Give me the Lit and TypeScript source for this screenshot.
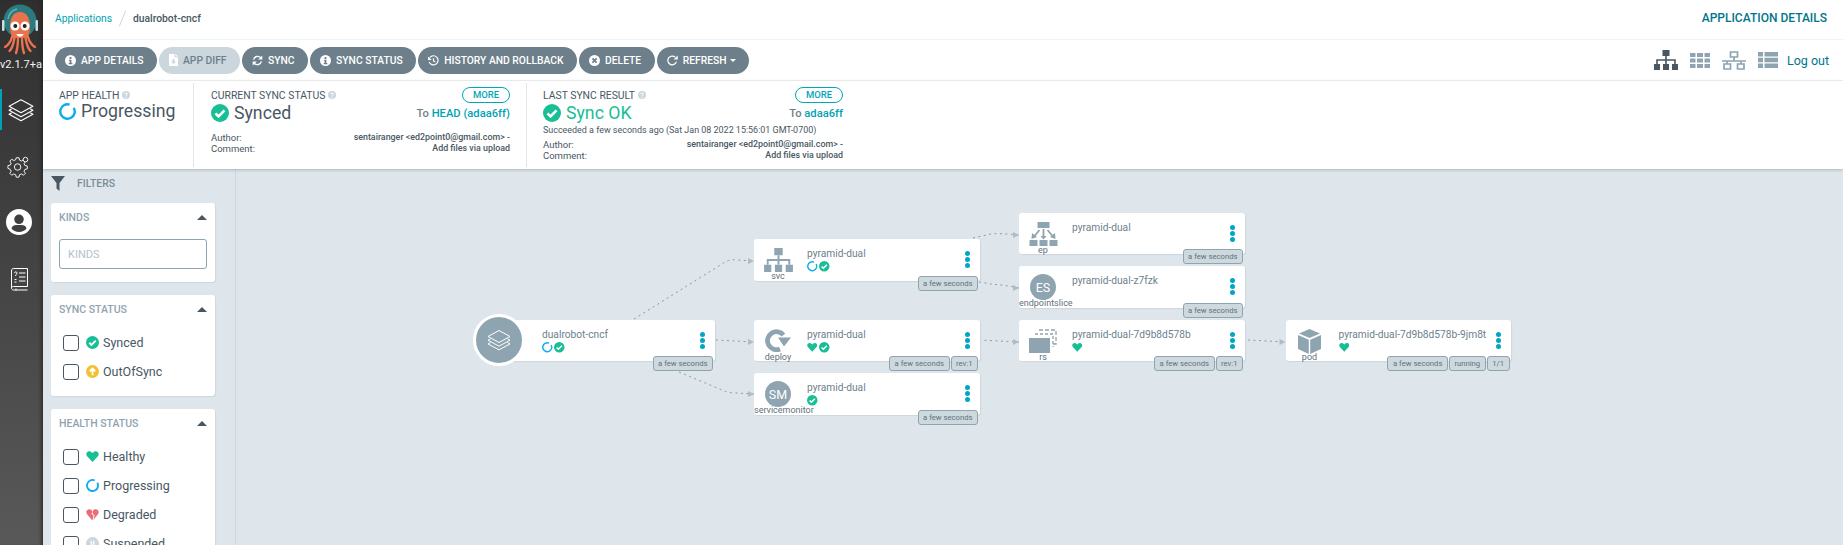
import { css, html, svg, LitElement } from "lit";
import { customElement } from "lit/decorators.js";

const GREY = "#8fa4b1";

const check = (s = 10.5) => html`<svg width=${s} height=${s} viewBox="0 0 24 24"><circle cx="12" cy="12" r="12" fill="#18be94"/><path d="M6 12.5l4 4 8-8" fill="none" stroke="#fff" stroke-width="3.6"/></svg>`;
const spin = (s = 10.5) => html`<svg width=${s} height=${s} viewBox="0 0 24 24"><circle cx="12" cy="12" r="10.2" fill="none" stroke="#0dadea" stroke-width="3.4" stroke-dasharray="56 8.1" transform="rotate(-30 12 12)"/></svg>`;
const heart = (s = 10.5) => html`<svg width=${s} height=${s} viewBox="0 0 24 24"><path d="M12 22L2 11.5C-1 8 1 2.5 6.2 2.5 9 2.5 11 4.5 12 6 13 4.5 15 2.5 17.8 2.5 23 2.5 25 8 22 11.5z" fill="#18be94"/></svg>`;
const help = () => html`<svg width="8" height="8" viewBox="0 0 24 24"><circle cx="12" cy="12" r="12" fill="#ccd6dd"/><path d="M8 9.5c0-5 8-5 8 0 0 3-4 3-4 6" fill="none" stroke="#fff" stroke-width="3"/><rect x="10.4" y="17.5" width="3.2" height="3.2" fill="#fff"/></svg>`;

const info = () => html`<svg width="11" height="11" viewBox="0 0 24 24"><path fill="#fff" fill-rule="evenodd" d="M12 0a12 12 0 1 0 0 24 12 12 0 0 0 0-24zM10 4.5h4v4h-4zM9 10.5h5v7h2V20H8v-2.5h2v-4.5H9z"/></svg>`;
const file = () => html`<svg width="9" height="12" viewBox="0 0 18 24"><path fill="#fff" fill-rule="evenodd" d="M0 0h11v7h7v17H0zM13 0l5 5h-5zM7 10v5H4l5 5 5-5h-3v-5z"/></svg>`;
const sync = () => html`<svg width="11" height="11" viewBox="0 0 24 24" fill="none" stroke="#fff" stroke-width="3"><path d="M3.5 10a9 9 0 0 1 15.5-4"/><path d="M20.5 14a9 9 0 0 1-15.5 4"/><path fill="#fff" stroke="none" d="M22.5 1v9h-9zM1.5 23v-9h9z"/></svg>`;
const history = () => html`<svg width="11" height="11" viewBox="0 0 24 24" fill="none" stroke="#fff" stroke-width="2.6"><path d="M4 5.5A10 10 0 1 1 2.5 15"/><path d="M12 7v6l4 2.5"/><path fill="#fff" stroke="none" d="M0 3l8 8H0z"/></svg>`;
const times = () => html`<svg width="11" height="11" viewBox="0 0 24 24"><circle cx="12" cy="12" r="12" fill="#fff"/><path d="M7.5 7.5l9 9M16.5 7.5l-9 9" stroke="#6d7f8b" stroke-width="3.6"/></svg>`;
const redo = () => html`<svg width="11" height="11" viewBox="0 0 24 24" fill="none" stroke="#fff" stroke-width="2.6"><path d="M20.5 14.5A9.5 9.5 0 1 1 18 5"/><path fill="#fff" stroke="none" d="M23.5 1v9h-9z"/></svg>`;

const sitemap = (c: string, w: number, h: number) => html`<svg width=${w} height=${h} viewBox="0 0 24 20"><path fill=${c} d="M8.5 0h7v6h-7zM0 14h6v6H0zM9 14h6v6H9zM18 14h6v6h-6z"/><path fill="none" stroke=${c} stroke-width="1.6" d="M12 6v8M3 14v-4h18v4"/></svg>`;
const gridIcon = () => html`<svg width="20" height="15" viewBox="0 0 20 15"><path fill=${GREY} d="M0 0h5.500v4H0zM7 0h6v4H7zM14.500 0H20v4h-5.500zM0 5.500h5.500v4H0zM7 5.500h6v4H7zM14.500 5.500H20v4h-5.500zM0 11h5.500v4H0zM7 11h6v4H7zM14.500 11H20v4h-5.500z"/></svg>`;
const network = () => html`<svg width="24" height="19" viewBox="0 0 24 19" fill="none" stroke=${GREY} stroke-width="1.7"><path d="M8.5 1h7v5h-7zM2 13h6.500v5H2zM15.500 13H22v5h-6.500zM12 6v4M0 10h24M5 10v3M19 10v3"/></svg>`;
const listIcon = () => html`<svg width="20" height="16" viewBox="0 0 20 16"><path fill=${GREY} d="M0 0h5v4.500H0zM6.500 0H20v4.500H6.500zM0 5.800h5v4.500H0zM6.500 5.800H20v4.500H6.500zM0 11.500h5V16H0zM6.500 11.500H20V16H6.500z"/></svg>`;

const layers = (s: number) => html`<svg width=${s} height=${s} viewBox="0 0 24 24" fill="none" stroke="#fff" stroke-width="1" stroke-linejoin="round"><path d="M12 2.5L23 8.5 12 14.5 1 8.5z"/><path d="M3.5 10.800L1 12.200 12 18.200 23 12.200 20.500 10.800"/><path d="M3.5 14.500L1 15.900 12 21.900 23 15.900 20.500 14.500"/></svg>`;

const logo = html`<svg width="40" height="56" viewBox="0 0 40 56">
  <circle cx="20" cy="21" r="16.500" fill="#2c7a7e"/>
  <path d="M8 19a12.500 12.500 0 0 1 9-10" fill="none" stroke="#5db5b5" stroke-width="1.500"/>
  <rect x="2" y="20" width="2.500" height="11" rx="1" fill="#c7dfe6"/>
  <rect x="35.500" y="20" width="2.500" height="11" rx="1" fill="#c7dfe6"/>
  <path d="M10 27c0-10 4-15 10-15s10 5 10 15c0 6-2 9-2 11H12c0-2-2-5-2-11z" fill="#e9734e"/>
  <path d="M12 37c-1 5-5 9-7 10M14.500 38c-1 6-3 11-5 13M18 38c0 6-1 12-2 15M22 38c0 6 1 12 2 15M25.500 38c1 6 3 11 5 13M28 37c1 5 5 9 7 10" stroke="#e9734e" stroke-width="2.400" fill="none" stroke-linecap="round"/>
  <circle cx="15" cy="26" r="4.500" fill="#fff"/><circle cx="25" cy="26" r="4.500" fill="#fff"/>
  <circle cx="15.300" cy="26" r="2" fill="#222"/><circle cx="24.700" cy="26" r="2" fill="#222"/>
  <path d="M16.500 34h7c-.5 3.500-6.500 3.500-7 0z" fill="#fff"/>
</svg>`;

const gear = html`<svg width="24" height="24" viewBox="0 0 26 26" fill="none" stroke="#fff" stroke-width="1"><path d="M10 3h3l.6 2.600 2 .9 2.300-1.400 2 2-1.400 2.300.9 2 2.600.6v3l-2.600.6-.9 2 1.400 2.300-2 2-2.300-1.400-2 .9-.6 2.600h-3l-.6-2.600-2-.9-2.300 1.400-2-2 1.400-2.300-.9-2L1 14.500v-3l2.600-.6.9-2-1.400-2.300 2-2 2.300 1.400 2-.9z"/><circle cx="11.500" cy="13" r="3.500"/><circle cx="20" cy="5" r="2.500" fill="#3a3a3a"/></svg>`;
const user = html`<svg width="26" height="26" viewBox="0 0 26 26"><path fill="#fff" fill-rule="evenodd" d="M13 0a13 13 0 1 0 0 26 13 13 0 0 0 0-26zM13 5.500a4.800 4.800 0 1 1 0 9.600 4.800 4.800 0 0 1 0-9.600zM13 23c-3 0-6-1.500-7.500-3.600C6 17 8.500 16 10 16h6c1.500 0 4 1 4.500 3.400C19 21.500 16 23 13 23z"/></svg>`;
const book = html`<svg width="17" height="23" viewBox="0 0 17 23" fill="none" stroke="#fff" stroke-width="1"><path d="M2.500.5h14v18h-14C1.200 18.500.5 19 .5 20s.7 2 2 2h14M.5 20V3C.5 1.500 1.300.5 2.500.5M5 20.500v2"/><path d="M8 5h6.500M8 9h6.500M8 13h6.500M3.500 5c0-1.500 2.500-1.500 2.500 0S4.500 6.500 4.500 8M3.500 11.500h2M3.500 14h2"/></svg>`;

const funnel = html`<svg width="14" height="15" viewBox="0 0 14 15"><path fill="#495763" d="M0 0h14L8.500 7v8L5.500 12.500V7z"/></svg>`;

const svcIcon = () => sitemap(GREY, 29, 24);
const deployIcon = () => html`<svg width="26" height="24" viewBox="0 0 26 24" fill="none"><path d="M15 20A9 9 0 1 1 18.500 6" stroke=${GREY} stroke-width="4.800"/><path fill=${GREY} d="M26 8.500L19 17.500 13 8.500z"/></svg>`;
const epIcon = () => html`<svg width="29" height="24" viewBox="0 0 28 24"><path fill=${GREY} d="M8 0h12v6H8zM0 18h8v6H0zM10 18h8v6h-8zM20 18h8v6h-8z"/><path fill="none" stroke=${GREY} stroke-width="1.800" d="M14 7v8M10 8l-5 6M18 8l5 6"/><path fill=${GREY} d="M11 14h6l-3 3.500zM2.500 11l5 4-5.500 2zM25.500 11l-5 4 5.500 2z"/></svg>`;
const rsIcon = () => html`<svg width="28" height="24" viewBox="0 0 28 24" fill="none"><path stroke=${GREY} stroke-width="1.300" stroke-dasharray="4 2" d="M10 1h17v14h-3"/><path stroke=${GREY} stroke-width="1.300" stroke-dasharray="3 2" d="M6 5h18v13"/><path fill=${GREY} d="M0 9h21v15H0z"/></svg>`;
const podIcon = () => html`<svg width="23" height="25" viewBox="0 0 23 25"><path fill=${GREY} d="M11.500 0L22 4.500 11.500 9 1 4.500zM0 6l10.800 4.700V25L0 20zM23 6l-10.800 4.700V25L23 20z"/></svg>`;
const letters = (t: string) => html`<span class="letters">${t}</span>`;

const tabs = [
  { label: "APP DETAILS", icon: info },
  { label: "APP DIFF", icon: file, off: true },
  { label: "SYNC", icon: sync },
  { label: "SYNC STATUS", icon: info },
  { label: "HISTORY AND ROLLBACK", icon: history },
  { label: "DELETE", icon: times },
  { label: "REFRESH", icon: redo, caret: true },
];

type Node = { x: number; y: number; h: number; kind?: string; name: string; icon?: () => unknown; st: unknown[]; tags: string[] };

// page coords minus canvas origin (236,169)
const nodes: Node[] = [
  { x: 253, y: 151, h: 41, name: "dualrobot-cncf", st: [spin(), check()], tags: ["a few seconds"] },
  { x: 518, y: 70, h: 42, kind: "svc", name: "pyramid-dual", icon: svcIcon, st: [spin(), check()], tags: ["a few seconds"] },
  { x: 518, y: 151, h: 41, kind: "deploy", name: "pyramid-dual", icon: deployIcon, st: [heart(), check()], tags: ["a few seconds", "rev:1"] },
  { x: 518, y: 204, h: 42, kind: "servicemonitor", name: "pyramid-dual", icon: () => letters("SM"), st: [check()], tags: ["a few seconds"] },
  { x: 783, y: 44, h: 41, kind: "ep", name: "pyramid-dual", icon: epIcon, st: [], tags: ["a few seconds"] },
  { x: 783, y: 97, h: 42, kind: "endpointslice", name: "pyramid-dual-z7fzk", icon: () => letters("ES"), st: [], tags: ["a few seconds"] },
  { x: 783, y: 151, h: 41, kind: "rs", name: "pyramid-dual-7d9b8d578b", icon: rsIcon, st: [heart()], tags: ["a few seconds", "rev:1"] },
  { x: 1049.5, y: 151, h: 41, kind: "pod", name: "pyramid-dual-7d9b8d578b-9jm8t", icon: podIcon, st: [heart()], tags: ["a few seconds", "running", "1/1"] },
];

const edges = [
  "M398 150L486 95Q492 90 500 91L518 92",
  "M480 171L518 173",
  "M443 203L486 221Q492 224 500 224L518 225",
  "M737 69L755 65Q762 64 783 66",
  "M743 113L755 115Q768 116 783 119",
  "M743 171L783 173",
  "M1012 171L1049.500 173",
];
const arrows: [number, number][] = [[518, 92], [518, 173], [518, 225], [783, 66], [783, 119], [783, 173], [1049.5, 173]];

@customElement("app-root")
export class AppRoot extends LitElement {
  static styles = css`
    :host { display: block; height: 100vh; overflow: hidden; font-family: Roboto, "Liberation Sans", sans-serif; color: #495763; background: #fff; }
    * { box-sizing: border-box; }
    svg { flex: none; }
    .app { display: flex; height: 100%; }
    .side { width: 43px; flex: none; background: linear-gradient(180deg, #2f2f2f 0%, #595959 100%); box-shadow: inset -4px 0 4px -3px #222; color: #fff; display: flex; flex-direction: column; align-items: center; overflow: hidden; position: relative; z-index: 3; }
    .logo { height: 58px; width: 100%; display: flex; }
    .version { font-size: 11px; height: 31px; line-height: 14px; width: 100%; white-space: nowrap; color: #f2f2f2; }
    .nav { width: 100%; height: 41px; display: flex; align-items: center; justify-content: center; }
    .nav.on { border-left: 2px solid #00a2b3; padding-right: 4px; }
    .nav.gear { margin-top: 24px; padding-right: 5px; height: 26px; }
    .nav.user { margin-top: 29px; padding-right: 5px; height: 26px; }
    .nav.book { margin-top: 33px; padding-right: 5px; height: 23px; }
    .main { flex: 1; min-width: 0; display: flex; flex-direction: column; }
    .top { height: 40px; flex: none; border-bottom: 1px solid #eff3f5; display: flex; align-items: center; justify-content: space-between; padding: 0 16px 3px 12px; }
    .crumbs { display: flex; align-items: center; font-size: 10.3px; }
    .crumbs a { color: #00a2b3; }
    .crumbs b { font-weight: 500; color: #495763; }
    .slash { width: 1px; height: 17px; background: #ccd6dd; transform: rotate(22deg); margin: 0 10px; }
    .title { font-size: 12px; font-weight: 500; color: #00758a; }
    .bar { height: 41px; flex: none; border-bottom: 1px solid #eff3f5; display: flex; align-items: center; justify-content: space-between; padding: 0 14px 0 12px; }
    .btns { display: flex; gap: 2px; }
    .btn { height: 27px; border-radius: 14px; background: #6d7f8b; color: #fff; font-size: 10.3px; font-weight: 500; padding: 0 13.5px 0 10px; display: flex; align-items: center; gap: 5px; white-space: nowrap; }
    .btn.off { background: #ccd6dd; color: #6d7f8b; }
    .caret { width: 0; height: 0; border: 3px solid transparent; border-top: 3.5px solid #fff; border-bottom: 0; margin-left: -2px; }
    .views { display: flex; align-items: center; gap: 12px; }
    .views .out { color: #00758a; font-size: 12.5px; margin-left: -3px; }
    .summary { height: 88px; flex: none; display: flex; position: relative; z-index: 2; background: #fff; box-shadow: 0 1px 3px rgba(0,0,0,.22); padding: 2px 0; }
    .sec { padding: 5px 16px 0 16px; border-right: 1px solid #dee6eb; position: relative; font-size: 9.5px; }
    .sec:last-child { border: 0; }
    .s1 { width: 151px; }
    .s1 .big { margin-top: -3px; }
    .s2 { width: 333px; padding-left: 17px; }
    .s3 { width: 332px; }
    .head { font-size: 10.4px; color: #495763; display: flex; align-items: center; gap: 3px; height: 14px; }
    .big { display: flex; align-items: center; gap: 5px; font-size: 17.7px; height: 24px; margin-top: -1px; color: #495763; }
    .big.ok { color: #18be94; }
    .more { position: absolute; right: 16px; top: 4px; width: 48px; height: 16px; border: 1px solid #00a7b7; border-radius: 8px; color: #00a7b7; font-size: 9.5px; font-weight: 500; text-align: center; line-height: 14px; }
    .to { position: absolute; right: 16px; top: 24px; font-size: 11.2px; font-weight: 500; color: #6d7f8b; }
    .to a { color: #00a2b3; }
    .note { line-height: 11px; color: #495763; font-size: 8.95px; }
    .meta { display: grid; grid-template-columns: auto 1fr; line-height: 11px; margin-top: 3px; }
    .s2 .meta { margin-top: 7px; }
    .meta span:nth-child(even) { text-align: right; font-weight: 500; color: #495763; font-size: 8.9px; }
    .body { flex: 1; min-height: 0; display: flex; background: #dee6eb; }
    .filters { width: 193px; flex: none; border-right: 1px solid #ced8de; padding: 7px 20px 0 8px; overflow: hidden; }
    .ftitle { display: flex; align-items: center; gap: 12px; height: 15px; font-size: 10.4px; font-weight: 500; color: #7a8c98; margin-bottom: 12px; }
    .card { background: #fff; border-radius: 3px; box-shadow: 1px 1px 1px #ccd6dd; padding: 8px; margin-bottom: 13px; }
    .chead { display: flex; justify-content: space-between; align-items: center; height: 13px; font-size: 10.5px; font-weight: 500; color: #8fa4b1; }
    .tri { width: 0; height: 0; border: 5px solid transparent; border-bottom: 5px solid #495763; border-top: 0; }
    .input { height: 30px; margin-top: 15px; margin-bottom: 5px; border: 1px solid #8fa4b1; border-radius: 3px; font-size: 11px; color: #b5c1c9; padding: 0 8px; display: flex; align-items: center; }
    .rows { padding: 12px 4px 2px; display: grid; grid-auto-rows: 29px; }
    .row { display: flex; align-items: center; font-size: 12.5px; color: #495763; white-space: nowrap; }
    .box { width: 16px; height: 16px; border: 1px solid #495763; border-radius: 3px; margin-right: 7px; background: #fff; flex: none; }
    .ico { width: 13px; height: 13px; margin-right: 4px; display: flex; }
    .canvas { flex: 1; position: relative; overflow: hidden; }
    .edges { position: absolute; left: 0; top: 0; }
    .node { position: absolute; background: #fff; border-radius: 3px; box-shadow: 1px 1px 1px #ccd6dd; display: grid; grid-template-columns: 53px 1fr 22px; width: 225.5px; }
    .nicon { position: relative; display: flex; justify-content: center; align-items: flex-start; padding-top: 9px; height: 100%; width: 48px; }
    .kind { position: absolute; top: 32px; left: 0; width: 48px; text-align: center; line-height: 11px; font-size: 9px; white-space: nowrap; color: #5f707c; }
    .letters { width: 26px; height: 26px; margin-top: -1px; border-radius: 50%; background: #8fa4b1; color: #fff; font-size: 12.5px; display: flex; align-items: center; justify-content: center; }
    .nbody { padding-top: 8px; min-width: 0; }
    .name { font-size: 10.2px; line-height: 14px; white-space: nowrap; color: #6d7f8b; }
    .st { display: flex; gap: 1.5px; height: 11px; }
    .dots { display: flex; flex-direction: column; gap: 1px; align-items: center; padding-top: 12px; padding-right: 3px; }
    .dots i { width: 5px; height: 5px; border-radius: 50%; background: #00a7c4; }
    .tags { position: absolute; right: 1.5px; top: calc(100% - 5px); display: flex; gap: 1px; }
    .tag { height: 15px; padding: 0 4.5px; background: #ced9de; border: 1px solid #8fa4b1; border-radius: 3px; font-size: 7.7px; line-height: 13px; color: #5f707c; white-space: nowrap; }
    .app-circle { position: absolute; left: 237px; top: 145px; width: 52px; height: 52px; border-radius: 50%; background: #8fa4b1; border: 3px solid #fff; display: flex; align-items: center; justify-content: center; }
  `;

  renderNode(n: Node) {
    const style = `left:${n.x}px;top:${n.y}px;height:${n.h}px`;
    return html`
      <div class="node" style=${style}>
        <div class="nicon">${n.icon ? n.icon() : ""}${n.kind ? html`<span class="kind">${n.kind}</span>` : ""}</div>
        <div class="nbody">
          <div class="name">${n.name}</div>
          <div class="st">${n.st}</div>
        </div>
        <div class="dots"><i></i><i></i><i></i></div>
        <div class="tags">${n.tags.map((t) => html`<span class="tag">${t}</span>`)}</div>
      </div>
    `;
  }

  renderFilter(title: string, rows: [unknown, string][]) {
    return html`
      <div class="card">
        <div class="chead">${title}<span class="tri"></span></div>
        <div class="rows">
          ${rows.map(([ic, label]) => html`<div class="row"><span class="box"></span><span class="ico">${ic}</span>${label}</div>`)}
        </div>
      </div>
    `;
  }

  render() {
    const outOfSync = html`<svg width="13" height="13" viewBox="0 0 24 24"><circle cx="12" cy="12" r="12" fill="#f4c030"/><path d="M12 19V7M7 11.5l5-5 5 5" fill="none" stroke="#fff" stroke-width="3.5"/></svg>`;
    const degraded = html`<svg width="13" height="13" viewBox="0 0 24 24"><path d="M11 22L2 11.5C-1 8 1 2.5 6.2 2.5 9 2.5 11 4.5 12 6L10 11l4 3-2 8zM13.5 22L22 11.5C25 8 23 2.5 17.8 2.500 15.5 2.500 14 3.500 13 5l-1 5 4 4z" fill="#e96d76"/></svg>`;
    const suspended = html`<svg width="13" height="13" viewBox="0 0 24 24"><circle cx="12" cy="12" r="12" fill="#ccd6dd"/><path d="M8.5 7h2.500v10H8.500zM13 7h2.500v10H13z" fill="#fff"/></svg>`;
    return html`
      <div class="app">
        <aside class="side">
          <div class="logo">${logo}</div>
          <div class="version">v2.1.7+a</div>
          <div class="nav on">${layers(26)}</div>
          <div class="nav gear">${gear}</div>
          <div class="nav user">${user}</div>
          <div class="nav book">${book}</div>
        </aside>
        <div class="main">
          <div class="top">
            <div class="crumbs"><a>Applications</a><span class="slash"></span><b>dualrobot-cncf</b></div>
            <div class="title">APPLICATION DETAILS</div>
          </div>
          <div class="bar">
            <div class="btns">
              ${tabs.map((t) => html`<div class="btn ${t.off ? "off" : ""}">${t.icon()}${t.label}${t.caret ? html`<span class="caret"></span>` : ""}</div>`)}
            </div>
            <div class="views">
              ${sitemap("#495763", 24, 20)}${gridIcon()}${network()}${listIcon()}
              <span class="out">Log out</span>
            </div>
          </div>
          <div class="summary">
            <div class="sec s1">
              <div class="head">APP HEALTH ${help()}</div>
              <div class="big">${spin(17)}Progressing</div>
            </div>
            <div class="sec s2">
              <div class="head">CURRENT SYNC STATUS ${help()}</div>
              <div class="big">${check(18)}Synced</div>
              <span class="more">MORE</span>
              <span class="to">To <a>HEAD (adaa6ff)</a></span>
              <div class="meta">
                <span>Author:</span><span>sentairanger &lt;ed2point0@gmail.com&gt; -</span>
                <span>Comment:</span><span>Add files via upload</span>
              </div>
            </div>
            <div class="sec s3">
              <div class="head">LAST SYNC RESULT ${help()}</div>
              <div class="big ok">${check(18)}Sync OK</div>
              <span class="more">MORE</span>
              <span class="to">To <a>adaa6ff</a></span>
              <div class="note">Succeeded a few seconds ago (Sat Jan 08 2022 15:56:01 GMT-0700)</div>
              <div class="meta">
                <span>Author:</span><span>sentairanger &lt;ed2point0@gmail.com&gt; -</span>
                <span>Comment:</span><span>Add files via upload</span>
              </div>
            </div>
          </div>
          <div class="body">
            <div class="filters">
              <div class="ftitle">${funnel}<span>FILTERS</span></div>
              <div class="card">
                <div class="chead">KINDS<span class="tri"></span></div>
                <div class="input">KINDS</div>
              </div>
              ${this.renderFilter("SYNC STATUS", [[check(13), "Synced"], [outOfSync, "OutOfSync"]])}
              ${this.renderFilter("HEALTH STATUS", [[heart(13), "Healthy"], [spin(13), "Progressing"], [degraded, "Degraded"], [suspended, "Suspended"]])}
            </div>
            <div class="canvas">
              <svg class="edges" width="1607" height="375" fill="none">
                ${edges.map((d) => svg`<path d=${d} stroke="#8a9aa5" stroke-width="1" stroke-dasharray="2 3.5"></path>`)}
                ${arrows.map(([x, y]) => svg`<path d="M${x - 6} ${y - 3}L${x} ${y}L${x - 6} ${y + 3}z" fill="#b0bcc4"></path>`)}
              </svg>
              ${nodes.map((n) => this.renderNode(n))}
              <div class="app-circle">${layers(24)}</div>
            </div>
          </div>
        </div>
      </div>
    `;
  }
}
